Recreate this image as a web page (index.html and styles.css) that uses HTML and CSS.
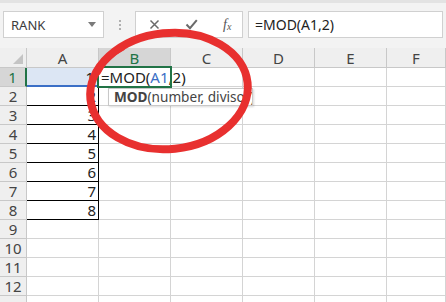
FILE: index.html
```html
<!DOCTYPE html>
<html lang="en">
<head>
    <meta charset="UTF-8">
    <title>MOD formula</title>
    <link rel="stylesheet" href="styles.css">
</head>
<body>
    <div class="toolbar">
        <div class="namebox">
            <span>RANK</span>
            <span class="caret"></span>
        </div>
        <div class="dots"><i></i><i></i><i></i></div>
        <div class="fxbox">
            <svg class="icon" width="11" height="11" viewBox="0 0 11 11"><path d="M1.5 1.5 L9.5 9.5 M9.5 1.5 L1.5 9.5" stroke="#6a6a6a" stroke-width="1.5" fill="none"/></svg>
            <svg class="icon" width="13" height="11" viewBox="0 0 13 11"><path d="M1.5 5.5 L5 9.2 L11.8 1.2" stroke="#6a6a6a" stroke-width="2" fill="none"/></svg>
            <span class="fx">f<sub>x</sub></span>
        </div>
        <div class="formula">=MOD(A1,2)</div>
    </div>

    <div class="sheet">
        <div class="corner"><span class="tri"></span></div>
        <div class="colhead">A</div>
        <div class="colhead sel">B</div>
        <div class="colhead">C</div>
        <div class="colhead">D</div>
        <div class="colhead">E</div>
        <div class="colhead">F</div>

        <div class="rowhead sel">1</div>
        <div class="cell num boxed ref">1</div>
        <div class="cell active">=MOD(<span class="blue">A1</span>,2)
            <div class="tip"><b>MOD</b>(number, divisor)</div>
        </div>
        <div class="cell"></div><div class="cell"></div><div class="cell"></div><div class="cell"></div>

        <div class="rowhead">2</div>
        <div class="cell num boxed">2</div>
        <div class="cell"></div><div class="cell"></div><div class="cell"></div><div class="cell"></div><div class="cell"></div>

        <div class="rowhead">3</div>
        <div class="cell num boxed">3</div>
        <div class="cell"></div><div class="cell"></div><div class="cell"></div><div class="cell"></div><div class="cell"></div>

        <div class="rowhead">4</div>
        <div class="cell num boxed">4</div>
        <div class="cell"></div><div class="cell"></div><div class="cell"></div><div class="cell"></div><div class="cell"></div>

        <div class="rowhead">5</div>
        <div class="cell num boxed">5</div>
        <div class="cell"></div><div class="cell"></div><div class="cell"></div><div class="cell"></div><div class="cell"></div>

        <div class="rowhead">6</div>
        <div class="cell num boxed">6</div>
        <div class="cell"></div><div class="cell"></div><div class="cell"></div><div class="cell"></div><div class="cell"></div>

        <div class="rowhead">7</div>
        <div class="cell num boxed">7</div>
        <div class="cell"></div><div class="cell"></div><div class="cell"></div><div class="cell"></div><div class="cell"></div>

        <div class="rowhead">8</div>
        <div class="cell num boxed">8</div>
        <div class="cell"></div><div class="cell"></div><div class="cell"></div><div class="cell"></div><div class="cell"></div>

        <div class="rowhead">9</div>
        <div class="cell"></div><div class="cell"></div><div class="cell"></div><div class="cell"></div><div class="cell"></div><div class="cell"></div>

        <div class="rowhead">10</div>
        <div class="cell"></div><div class="cell"></div><div class="cell"></div><div class="cell"></div><div class="cell"></div><div class="cell"></div>

        <div class="rowhead">11</div>
        <div class="cell"></div><div class="cell"></div><div class="cell"></div><div class="cell"></div><div class="cell"></div><div class="cell"></div>

        <div class="rowhead">12</div>
        <div class="cell"></div><div class="cell"></div><div class="cell"></div><div class="cell"></div><div class="cell"></div><div class="cell"></div>

        <div class="rowhead"></div>
        <div class="cell"></div><div class="cell"></div><div class="cell"></div><div class="cell"></div><div class="cell"></div><div class="cell"></div>
    </div>

    <!-- hand-drawn red circle on top of the screenshot -->
    <svg class="scribble" width="446" height="302" viewBox="0 0 446 302">
        <ellipse cx="169" cy="91" rx="79" ry="58" transform="rotate(-6 169 91)" fill="none" stroke="#e8302f" stroke-width="8"/>
        <path d="M98 72 Q 105 56 122 48" fill="none" stroke="#e8302f" stroke-width="6" stroke-linecap="round"/>
    </svg>
</body>
</html>
```

FILE: styles.css
```css
body {
    margin: 0;
    width: 446px;
    height: 302px;
    overflow: hidden;
    position: relative;
    background-color: #fff;
    font-family: "Noto Sans", "Liberation Sans", sans-serif;
    color: #333;
}

/* formula bar */
.toolbar {
    height: 48px;
    box-sizing: border-box;
    border-top: 3px solid #e3e3e3;
    background-color: #f3f3f3;
    display: flex;
    align-items: flex-start;
    padding-top: 8px;
}

.namebox {
    margin-left: 3px;
    width: 101px;
    height: 27px;
    box-sizing: border-box;
    background-color: #fff;
    border: 1px solid #d0d0d0;
    display: flex;
    align-items: center;
    justify-content: space-between;
    padding: 0 7px 0 7px;
    font-size: 13px;
    color: #3c3c3c;
}

.caret {
    width: 0;
    height: 0;
    border-left: 4px solid transparent;
    border-right: 4px solid transparent;
    border-top: 5px solid #7a7a7a;
}

.dots {
    margin-left: 14px;
    width: 4px;
    height: 27px;
    display: flex;
    flex-direction: column;
    align-items: center;
    justify-content: center;
    gap: 2px;
}

.dots i {
    width: 2px;
    height: 2px;
    background-color: #b0b0b0;
}

.fxbox {
    margin-left: 13px;
    width: 108px;
    height: 27px;
    box-sizing: border-box;
    background-color: #fff;
    border: 1px solid #d0d0d0;
    display: flex;
    align-items: center;
    padding-left: 13px;
    gap: 25px;
}

.fx {
    font-family: "Liberation Serif", serif;
    font-style: italic;
    font-size: 14px;
    color: #555;
    line-height: 1;
}

.fx sub {
    font-size: 10px;
    vertical-align: -1px;
}

.formula {
    margin-left: 5px;
    width: 195px;
    height: 27px;
    box-sizing: border-box;
    background-color: #fff;
    border: 1px solid #d0d0d0;
    padding-left: 6px;
    font-size: 14px;
    line-height: 25px;
    color: #222;
}

/* grid */
.sheet {
    display: grid;
    grid-template-columns: 27px repeat(5, 72px) 1fr;
    grid-template-rows: 20px;
    grid-auto-rows: 19px;
    font-size: 15px;
}

.sheet > div {
    box-sizing: border-box;
    border-right: 1px solid #d4d4d4;
    border-bottom: 1px solid #d4d4d4;
}

.corner {
    background-color: #efefef;
    position: relative;
    border-color: #c8c8c8 !important;
}

.tri {
    position: absolute;
    right: 3px;
    bottom: 3px;
    width: 0;
    height: 0;
    border-left: 10px solid transparent;
    border-bottom: 10px solid #c4c4c4;
}

.colhead {
    background-color: #efefef;
    border-color: #c8c8c8 !important;
    text-align: center;
    line-height: 20px;
    color: #444;
}

.colhead.sel {
    background-color: #d6d6d6;
    color: #217346;
    border-bottom: 2px solid #217346 !important;
}

.rowhead {
    background-color: #efefef;
    border-color: #c8c8c8 !important;
    text-align: center;
    line-height: 18px;
    color: #444;
}

.rowhead.sel {
    background-color: #d6d6d6;
    color: #217346;
    border-right: 2px solid #217346 !important;
}

.cell {
    line-height: 18px;
    white-space: nowrap;
}

.num {
    text-align: right;
    padding-right: 2px;
    color: #222;
}

.boxed {
    border-right-color: #000 !important;
    border-bottom-color: #000 !important;
}

.ref {
    background-color: #dce6f4;
    border-bottom: 2px solid #3b6fc6 !important;
    padding-right: 4px;
}

.active {
    position: relative;
    z-index: 2;
    padding-left: 2px;
    color: #222;
    overflow: visible;
}

.active::after {
    content: '';
    position: absolute;
    left: -2px;
    top: -2px;
    right: -2px;
    bottom: -2px;
    border: 2px solid #217346;
}

.blue {
    color: #3b6fc6;
}

.tip {
    position: absolute;
    left: 9px;
    top: 20px;
    width: 145px;
    height: 18px;
    box-sizing: border-box;
    background-color: #fff;
    border: 1px solid #c8c8c8;
    box-shadow: 1px 1px 2px rgba(0, 0, 0, 0.15);
    font-size: 13.6px;
    line-height: 16px;
    padding-left: 5px;
    color: #444;
    overflow: hidden;
}

.tip b {
    color: #444;
}

.scribble {
    position: absolute;
    left: 0;
    top: 0;
    pointer-events: none;
    z-index: 5;
}
```
